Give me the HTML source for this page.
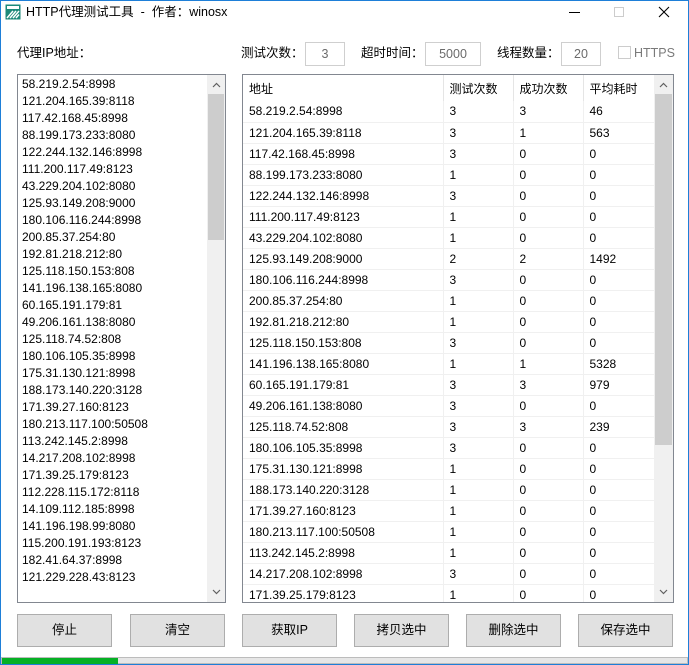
<!DOCTYPE html><html><head><meta charset="utf-8"><style>
*{margin:0;padding:0;box-sizing:border-box}
html{overflow:hidden}
body{width:689px;height:665px;background:#fff;font-family:"Liberation Sans","Noto Sans CJK SC",sans-serif;font-size:12px;color:#000;position:relative;overflow:hidden}
.a{position:absolute}
.win{left:0;top:0;width:689px;height:665px;border:1px solid #1e7fd8}
.lbl{font-size:12.5px;line-height:16px}
.inp{border:1px solid #cfcfcf;height:24px;text-align:center;line-height:22px;color:#6b6b6b;font-size:12.5px}
.box{border:1px solid #828790;background:#fff;overflow:hidden}
.row{position:absolute;left:4px;height:17px;line-height:17px;font-size:12px;white-space:nowrap}
.sb{background:#f0f0f0}
.th{background:#cdcdcd}
.btn{border:1px solid #adadad;background:#e1e1e1;height:33px;width:95px;text-align:center;line-height:31px;font-size:12.5px}
table{border-collapse:collapse;position:absolute;left:0;top:0;width:411px;table-layout:fixed}
td{height:21px;border-bottom:1px solid #f0f0f0;border-right:1px solid #f0f0f0;padding-left:6px;font-size:12px;white-space:nowrap;overflow:hidden}
tr.h td{height:26px;border-bottom:none;border-right:1px solid #e5e5e5;color:#000}
</style></head><body>
<div class="a win"></div>
<svg class="a" style="left:5px;top:4px" width="16" height="16" viewBox="0 0 16 16"><rect x="0.5" y="0.5" width="15" height="15" fill="#1d8a7a"/><rect x="2" y="2" width="12" height="3" fill="#fff"/><path d="M2 14L8 7M5 14L11 7M8 14L14 7M11 14L14 10.5" stroke="#fff" stroke-width="1.5"/></svg>
<div class="a" style="left:26px;top:4px;font-size:12.5px;line-height:16px">HTTP代理测试工具&nbsp; -&nbsp; 作者：winosx</div>
<div class="a" style="left:569px;top:12px;width:11px;height:1px;background:#000"></div>
<div class="a" style="left:614px;top:7px;width:10px;height:10px;border:1px solid #ccc"></div>
<svg class="a" style="left:658px;top:6px" width="12" height="12"><path d="M1 1L11 11M11 1L1 11" stroke="#000" stroke-width="1.1"/></svg>
<div class="a lbl" style="left:17px;top:45px">代理IP地址：</div>
<div class="a lbl" style="left:241px;top:45px">测试次数：</div>
<div class="a inp" style="left:305px;top:42px;width:40px">3</div>
<div class="a lbl" style="left:361px;top:45px">超时时间：</div>
<div class="a inp" style="left:425px;top:42px;width:56px">5000</div>
<div class="a lbl" style="left:497px;top:45px">线程数量：</div>
<div class="a inp" style="left:561px;top:42px;width:40px">20</div>
<div class="a" style="left:618px;top:46px;width:13px;height:13px;border:1px solid #ccc"></div>
<div class="a lbl" style="left:634px;top:45px;color:#7a7a7a">HTTPS</div>

<div class="a box" style="left:17px;top:74px;width:209px;height:529px">
<div id="L"></div>
<div class="a sb" style="left:189px;top:0;width:18px;height:527px"></div>
<div class="a th" style="left:190px;top:19px;width:16px;height:146px"></div>
<svg class="a" style="left:194px;top:7px" width="9" height="6"><path d="M1 5L4.5 1.5L8 5" stroke="#606060" fill="none" stroke-width="1.2"/></svg>
<svg class="a" style="left:194px;top:514px" width="9" height="6"><path d="M1 1L4.5 4.5L8 1" stroke="#606060" fill="none" stroke-width="1.2"/></svg>
</div>

<div class="a box" style="left:242px;top:74px;width:432px;height:529px">
<table id="T"><colgroup><col style="width:200px"><col style="width:70px"><col style="width:70px"><col style="width:71px"></colgroup>
<tr class="h"><td>地址</td><td>测试次数</td><td>成功次数</td><td>平均耗时</td></tr></table>
<div class="a sb" style="left:411px;top:0;width:19px;height:527px"></div>
<div class="a th" style="left:412px;top:19px;width:17px;height:351px"></div>
<svg class="a" style="left:416px;top:7px" width="9" height="6"><path d="M1 5L4.5 1.5L8 5" stroke="#606060" fill="none" stroke-width="1.2"/></svg>
<svg class="a" style="left:416px;top:514px" width="9" height="6"><path d="M1 1L4.5 4.5L8 1" stroke="#606060" fill="none" stroke-width="1.2"/></svg>
</div>

<div class="a btn" style="left:17px;top:614px">停止</div>
<div class="a btn" style="left:130px;top:614px">清空</div>
<div class="a btn" style="left:242px;top:614px">获取IP</div>
<div class="a btn" style="left:354px;top:614px">拷贝选中</div>
<div class="a btn" style="left:466px;top:614px">删除选中</div>
<div class="a btn" style="left:578px;top:614px">保存选中</div>
<div class="a" style="left:1px;top:657px;width:687px;height:7px;background:#e6e6e6;border:1px solid #bcbcbc"></div>
<div class="a" style="left:2px;top:658px;width:116px;height:6px;background:#06b025"></div>
<script>
var ips="58.219.2.54:8998,121.204.165.39:8118,117.42.168.45:8998,88.199.173.233:8080,122.244.132.146:8998,111.200.117.49:8123,43.229.204.102:8080,125.93.149.208:9000,180.106.116.244:8998,200.85.37.254:80,192.81.218.212:80,125.118.150.153:808,141.196.138.165:8080,60.165.191.179:81,49.206.161.138:8080,125.118.74.52:808,180.106.105.35:8998,175.31.130.121:8998,188.173.140.220:3128,171.39.27.160:8123,180.213.117.100:50508,113.242.145.2:8998,14.217.208.102:8998,171.39.25.179:8123,112.228.115.172:8118,14.109.112.185:8998,141.196.198.99:8080,115.200.191.193:8123,182.41.64.37:8998,121.229.228.43:8123".split(",");
var h="";ips.forEach(function(s,i){h+='<div class="row" style="top:'+(i*17+1)+'px">'+s+'</div>'});document.getElementById("L").innerHTML=h;
var d=[[3,3,46],[3,1,563],[3,0,0],[1,0,0],[3,0,0],[1,0,0],[1,0,0],[2,2,1492],[3,0,0],[1,0,0],[1,0,0],[3,0,0],[1,1,5328],[3,3,979],[3,0,0],[3,3,239],[3,0,0],[1,0,0],[1,0,0],[1,0,0],[1,0,0],[1,0,0],[3,0,0],[1,0,0]];
var t=document.getElementById("T");var r="";d.forEach(function(x,i){r+='<tr><td>'+ips[i]+'</td><td>'+x[0]+'</td><td>'+x[1]+'</td><td>'+x[2]+'</td></tr>'});t.innerHTML+=r;
</script>
</body></html>
